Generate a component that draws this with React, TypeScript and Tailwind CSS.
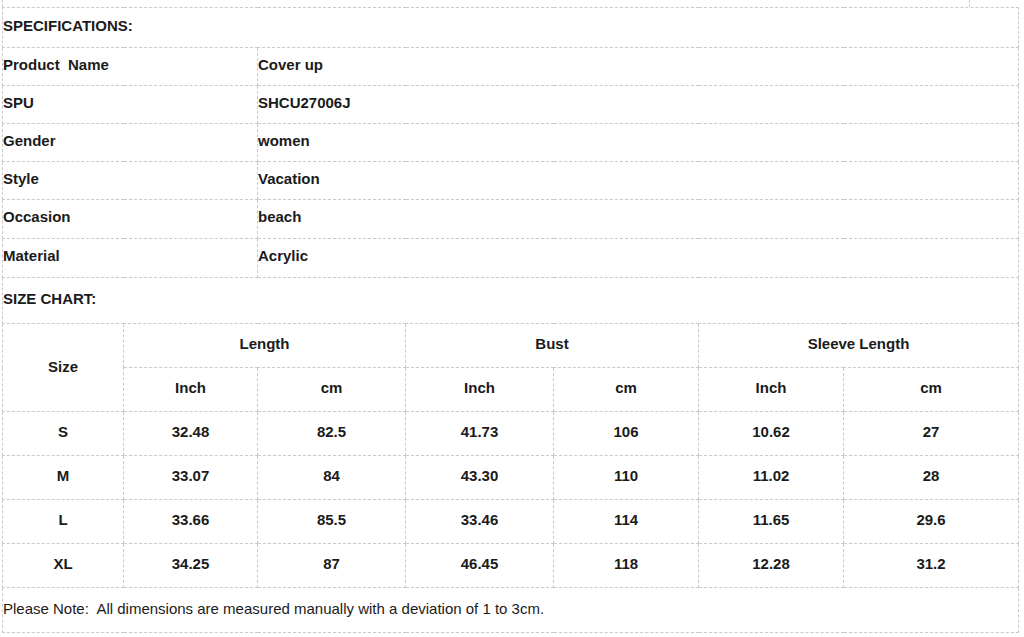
const specs: [string, string][] = [
  ["Product  Name", "Cover up"],
  ["SPU", "SHCU27006J"],
  ["Gender", "women"],
  ["Style", "Vacation"],
  ["Occasion", "beach"],
  ["Material", "Acrylic"],
]

const sizes = [
  ["S", "32.48", "82.5", "41.73", "106", "10.62", "27"],
  ["M", "33.07", "84", "43.30", "110", "11.02", "28"],
  ["L", "33.66", "85.5", "33.46", "114", "11.65", "29.6"],
  ["XL", "34.25", "87", "46.45", "118", "12.28", "31.2"],
]

const cell = "border border-dashed border-[#cacaca] p-0 align-middle"

export default function App() {
  return (
    <div className="min-h-[637px] bg-white pl-[2px] font-['Liberation_Sans',Arial,sans-serif] text-[15px] text-[#1b1b1b]">
      <div className="h-[7px] w-[968px] border-x border-dashed border-[#cacaca]" />
      <table className="w-[1016px] table-fixed border-collapse font-bold">
        <colgroup>
          <col className="w-[121px]" />
          <col className="w-[134px]" />
          <col className="w-[148px]" />
          <col className="w-[148px]" />
          <col className="w-[145px]" />
          <col className="w-[145px]" />
          <col className="w-[175px]" />
        </colgroup>
        <tbody>
          <tr>
            <td colSpan={7} className={`${cell} h-[40px] pb-[3px]`}>
              SPECIFICATIONS:
            </td>
          </tr>
          {specs.map(([k, v], i) => (
            <tr key={k}>
              <td colSpan={2} className={`${cell} ${i > 3 ? "h-[39px]" : "h-[38px]"} whitespace-pre pb-[3px]`}>
                {k}
              </td>
              <td colSpan={5} className={`${cell} pb-[3px]`}>
                {v}
              </td>
            </tr>
          ))}
          <tr>
            <td colSpan={7} className={`${cell} h-[46px] pb-[3px]`}>
              SIZE CHART:
            </td>
          </tr>
          <tr className="text-center">
            <td rowSpan={2} className={`${cell} pb-px`}>
              Size
            </td>
            <td colSpan={2} className={`${cell} h-[44px] pb-[2px]`}>
              Length
            </td>
            <td colSpan={2} className={`${cell} pb-[2px]`}>
              Bust
            </td>
            <td colSpan={2} className={`${cell} pb-[2px]`}>
              Sleeve Length
            </td>
          </tr>
          <tr className="text-center">
            {["Inch", "cm", "Inch", "cm", "Inch", "cm"].map((h, i) => (
              <td key={i} className={`${cell} h-[44px] pb-[2px]`}>
                {h}
              </td>
            ))}
          </tr>
          {sizes.map((row) => (
            <tr key={row[0]} className="text-center">
              {row.map((v, i) => (
                <td key={i} className={`${cell} h-[44px] pb-[2px]`}>
                  {v}
                </td>
              ))}
            </tr>
          ))}
          <tr>
            <td colSpan={7} className={`${cell} h-[45px] pb-px font-normal`}>
              Please Note:&nbsp; All dimensions are measured manually with a deviation of 1 to 3cm.
            </td>
          </tr>
        </tbody>
      </table>
    </div>
  )
}
